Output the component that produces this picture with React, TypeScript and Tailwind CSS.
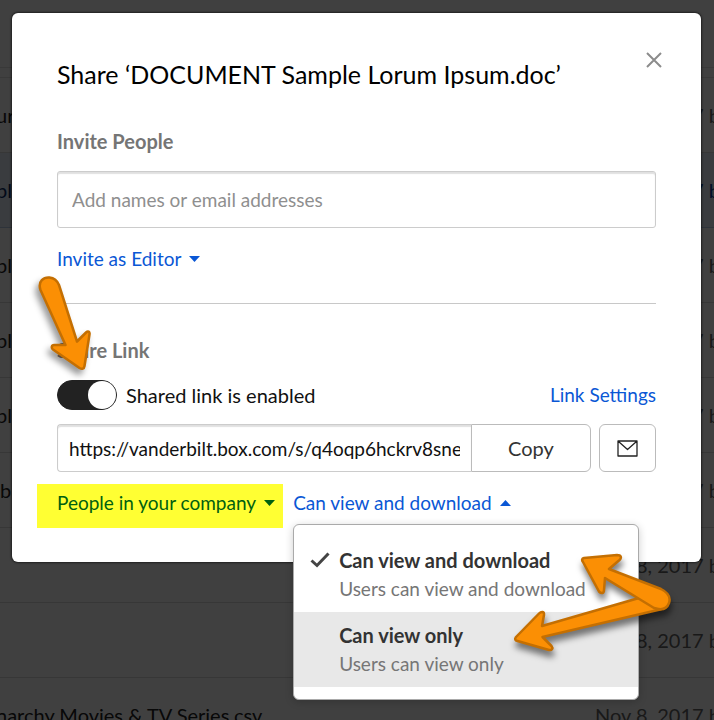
import { useState } from "react";
import clsx from "clsx";

const files = [
  { id: 1, name: "ur", date: "Nov 8, 2017 by", selected: false },
  { id: 2, name: "pl", date: "Nov 8, 2017 by", selected: true },
  { id: 3, name: "pl", date: "Nov 8, 2017 by", selected: false },
  { id: 4, name: "pl", date: "Nov 8, 2017 by", selected: false },
  { id: 5, name: "pl", date: "Nov 8, 2017 by", selected: false },
  { id: 6, name: "bu", date: "Nov 8, 2017 by", selected: false },
  { id: 7, name: "", date: "Nov 8, 2017 by", selected: false },
  { id: 8, name: "", date: "Nov 8, 2017 by", selected: false },
  { id: 9, name: "narchy Movies & TV Series.csv", date: "Nov 8, 2017 by", selected: false },
];

const permissions = [
  { id: "download", label: "Can view and download", hint: "Users can view and download" },
  { id: "view", label: "Can view only", hint: "Users can view only" },
];

function Caret({ up = false }: { up?: boolean }) {
  return (
    <svg viewBox="0 0 11 6" className="h-[6px] w-[11px] fill-current" aria-hidden="true">
      <path d={up ? "M0 6 5.500 0l5.500 6z" : "M0 0h11L5.500 6z"} />
    </svg>
  );
}

function FileList() {
  return (
    <div className="absolute inset-0 overflow-hidden bg-white text-xl" aria-hidden="true">
      <div className="h-[68px] border-b border-[#e4e4e4]" />
      <div className="h-[10px] border-b border-[#e4e4e4]" />
      {files.map((file) => (
        <div
          key={file.id}
          className={clsx(
            "flex h-[75px] items-center justify-between border-b",
            file.selected ? "border-[#b8cce8] bg-[#e8f0fa]" : "border-[#dcdcdc]"
          )}
        >
          <span
            className={clsx(
              "whitespace-nowrap",
              file.name !== "bu" && "-ml-1",
              file.selected ? "text-[#0a2a66]" : "text-[#222]"
            )}
          >
            {file.name}
          </span>
          <span className={clsx("w-[119px] whitespace-nowrap", file.selected ? "text-[#0a3a99]" : "text-[#666]")}>{file.date}</span>
        </div>
      ))}
    </div>
  );
}

function TogglePointer() {
  return (
    <svg
      viewBox="0 0 60 100"
      className="pointer-events-none absolute -top-[63px] -left-[20px] h-[100px] w-[60px] overflow-visible fill-[#fb8f04] stroke-[#c46f02] drop-shadow-[-3px_5px_3px_rgba(0,0,0,0.4)]"
      strokeWidth="2.5"
      strokeLinejoin="round"
      aria-hidden="true"
    >
      <path d="M3.500 17C0.500 8 7 4 12.500 4.500C17 5 20 7 22 12L40 68.500L49 59.500C51 57.500 53 58.500 52.500 61.500L47.500 93C47 96 45 96.500 42.500 95L16 76.500C14 75 14.500 72 17 72L28.500 72Z" />
    </svg>
  );
}

function MenuPointers() {
  return (
    <svg
      viewBox="0 0 160 100"
      className="pointer-events-none absolute top-[25px] -right-[33px] h-[100px] w-[160px] overflow-visible fill-[#fb8f04] stroke-[#c46f02] drop-shadow-[1px_6px_3px_rgba(0,0,0,0.5)]"
      strokeWidth="2.5"
      strokeLinejoin="round"
      aria-hidden="true"
    >
      <path d="M5 87L28 63.500C30.500 61 33.500 61.500 33 65L31 76L128 48L154 54C156 57 154 58 149 59.500L31.500 87L40.500 96C42.500 98.500 41 100.500 38 100L6.500 91C4 90.500 3.500 89 5 87Z" />
      <path d="M73 8L106 5C110 5 111 7.500 108.500 10L98 19L150 39C156 42 160 47 158 53C155.500 60 149 60 143 58L94 28L93 40C93 43.500 90.500 44 88 41.500L72 12C70.500 10 71 8.500 73 8Z" />
    </svg>
  );
}

export default function App() {
  const [enabled, setEnabled] = useState(true);
  const [menuOpen, setMenuOpen] = useState(true);
  const [permission, setPermission] = useState("download");

  return (
    <div className="relative min-h-screen overflow-hidden pt-[13px] pr-[13px] pl-3 font-['Lato','Open_Sans',sans-serif]">
      <FileList />
      <div className="absolute inset-0 bg-black/75" />

      <section
        role="dialog"
        aria-labelledby="share-title"
        className="relative rounded-md bg-white px-[45px] pt-[31px] pb-[34px] shadow-[0_0_2px_1px_rgba(0,0,0,0.5)]"
      >
        <header className="flex items-start justify-between">
          <h1 id="share-title" className="pt-3 text-[25px] leading-9 text-black">
            Share ‘DOCUMENT Sample Lorum Ipsum.doc’
          </h1>
          <button type="button" aria-label="Close" className="-mr-[14px] p-2">
            <svg viewBox="0 0 16 16" className="size-4 stroke-[#8c8c8c]" strokeWidth="2" fill="none">
              <path d="M1 1l14 14M15 1l-14 14" />
            </svg>
          </button>
        </header>

        <label htmlFor="invite" className="mt-[35px] block text-xl leading-7 font-bold text-[#757575]">
          Invite People
        </label>
        <input
          id="invite"
          type="text"
          placeholder="Add names or email addresses"
          className="mt-4 h-[57px] w-full rounded-[3px] border border-[#ccc] px-[14px] text-[19px] shadow-[inset_0_2px_1px_rgba(0,0,0,0.12)] placeholder:text-[#8f8f8f]"
        />
        <button type="button" className="mt-[17px] flex items-center gap-2 text-[19px] leading-7 text-[#0a57d5]">
          Invite as Editor
          <Caret />
        </button>

        <hr className="mt-[30px] border-[#c8c8c8]" />

        <div className="relative mt-8">
          <h2 className="text-xl leading-7 font-bold text-[#757575]">Share Link</h2>
          <TogglePointer />
        </div>

        <div className="mt-4 flex items-center justify-between text-xl leading-[30px]">
          <label className="flex items-center gap-[9px] text-[#111]">
            <input
              type="checkbox"
              role="switch"
              checked={enabled}
              onChange={(event) => setEnabled(event.target.checked)}
              className="peer sr-only"
            />
            <span className="flex h-[30px] w-[60px] rounded-full border border-[#222] bg-[#777] peer-checked:justify-end peer-checked:bg-[#222]">
              <span className="size-7 rounded-full bg-white" />
            </span>
            Shared link is enabled
          </label>
          <a href="#settings" className="text-[19px] text-[#0a57d5]">
            Link Settings
          </a>
        </div>

        <div className="mt-[14px] flex h-12 gap-2 text-xl">
          <div className="flex min-w-0 flex-1">
            <div className="min-w-0 flex-1 rounded-l border border-r-0 border-[#ccc] px-[11px] shadow-[inset_0_2px_1px_rgba(0,0,0,0.12)]">
              <input
                type="text"
                readOnly
                aria-label="Shared link"
                value="https://vanderbilt.box.com/s/q4oqp6hckrv8sne7"
                className="h-full w-full text-[19px] text-[#111]"
              />
            </div>
            <button type="button" className="w-[120px] rounded-r-md border border-[#bbb] text-[#333]">
              Copy
            </button>
          </div>
          <button type="button" aria-label="Email link" className="flex w-[57px] items-center justify-center rounded-md border border-[#bbb]">
            <svg viewBox="0 0 21 17" className="h-[17px] w-[21px] stroke-[#222]" strokeWidth="1.3" fill="none" strokeLinejoin="round">
              <path d="M1 1h19v15H1zM1.500 1.500l9 8 9-8" />
            </svg>
          </button>
        </div>

        <div className="mt-3 -ml-5 flex items-start gap-[10px] text-[19px]">
          <button type="button" className="flex h-11 items-start gap-2 bg-[#ffff33] pt-[5px] pr-2 pl-5 leading-7 text-[#006010]">
            People in your company
            <span className="flex h-7 items-center">
              <Caret />
            </span>
          </button>
          <div className="relative pt-[5px]">
            <button
              type="button"
              aria-haspopup="menu"
              aria-expanded={menuOpen}
              onClick={() => setMenuOpen(!menuOpen)}
              className="flex items-center gap-2 leading-7 text-[#0a57d5]"
            >
              Can view and download
              <Caret up />
            </button>
            {menuOpen && (
              <div className="absolute top-10 left-0 w-[346px] rounded-md border border-[#aaa] bg-white py-3 shadow-[0_2px_8px_rgba(0,0,0,0.2)]">
                <div role="menu">
                  {permissions.map((item) => (
                    <button
                      key={item.id}
                      type="button"
                      role="menuitemradio"
                      aria-checked={permission === item.id}
                      onClick={() => setPermission(item.id)}
                      className={clsx("flex h-[75px] w-full gap-2 pt-[9px] pl-4 text-left", item.id === "view" && "bg-[#e8e8e8]")}
                    >
                      <span className="flex h-7 w-[21px] items-center">
                        {permission === item.id && (
                          <svg viewBox="0 0 20 16" className="h-4 w-5 stroke-[#444]" strokeWidth="3" fill="none" aria-hidden="true">
                            <path d="M1.500 8.500l5.500 5L18.500 1.500" />
                          </svg>
                        )}
                      </span>
                      <span>
                        <span className="block text-xl leading-7 font-bold text-[#333]">{item.label}</span>
                        <span className="block text-[19px] leading-[30px] text-[#767676]">{item.hint}</span>
                      </span>
                    </button>
                  ))}
                </div>
                <MenuPointers />
              </div>
            )}
          </div>
        </div>
      </section>
    </div>
  );
}
